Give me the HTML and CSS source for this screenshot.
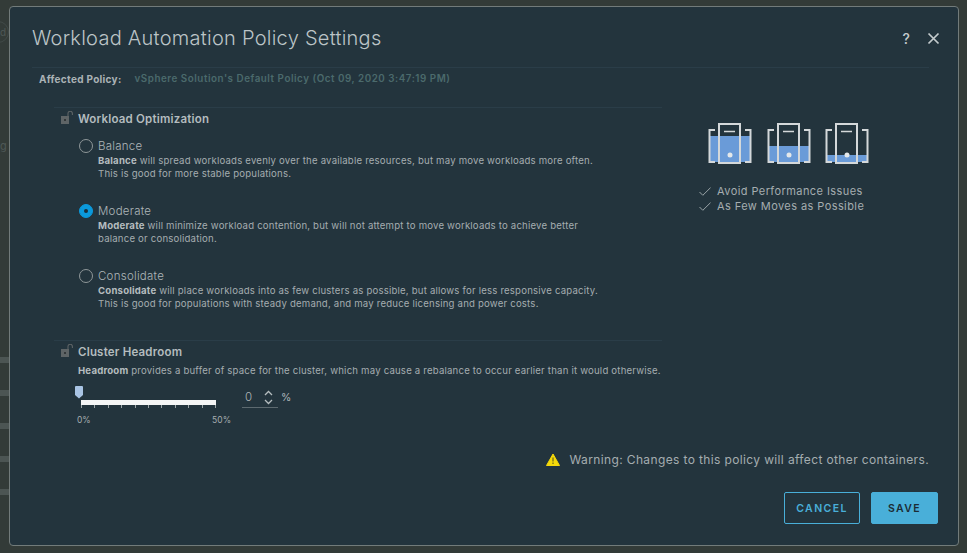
FILE: index.html
```html
<!DOCTYPE html>
<html lang="en">
<head>
<meta charset="utf-8">
<title>Workload Automation Policy Settings</title>
<link rel="stylesheet" href="styles.css">
</head>
<body>
<div class="backdrop-strip" aria-hidden="true">
  <div class="ghost-circle"><span>d</span></div>
  <div class="ghost-g">g</div>
  <div class="stripe first"></div>
  <div class="stripe"></div>
  <div class="stripe"></div>
  <div class="stripe"></div>
  <div class="stripe"></div>
</div>
<main class="modal">
  <header class="modal-head">
    <h1>Workload Automation Policy Settings</h1>
    <div class="head-actions">
      <span class="help">?</span>
      <svg class="close" width="13" height="13" viewBox="0 0 13 13"><path d="M1.5 1.5l10 10M11.5 1.5l-10 10" stroke="#c4cbcd" stroke-width="1.7" fill="none"/></svg>
    </div>
  </header>
  <div class="policy"><b>Affected Policy:</b><span>vSphere Solution's Default Policy (Oct 09, 2020 3:47:19 PM)</span></div>
  <div class="columns">
    <div class="settings">
      <section class="group optimization">
        <h2><svg class="lock" width="13" height="14" viewBox="0 0 13 14"><rect x="0" y="5" width="8" height="8" fill="#5e6466"/><rect x="3" y="8" width="2" height="2" fill="#33383a"/><path d="M7 5V2.5a2.2 2.2 0 0 1 4.4 0V4" stroke="#5e6466" stroke-width="1.1" fill="none"/></svg>Workload Optimization</h2>
        <div class="option">
          <span class="radio"></span>
          <div class="option-body">
            <div class="option-name">Balance</div>
            <p><b>Balance</b> will spread workloads evenly over the available resources, but may move workloads more often.<br>This is good for more stable populations.</p>
          </div>
        </div>
        <div class="option">
          <span class="radio on"></span>
          <div class="option-body">
            <div class="option-name">Moderate</div>
            <p><b>Moderate</b> will minimize workload contention, but will not attempt to move workloads to achieve better<br>balance or consolidation.</p>
          </div>
        </div>
        <div class="option">
          <span class="radio"></span>
          <div class="option-body">
            <div class="option-name">Consolidate</div>
            <p><b>Consolidate</b> will place workloads into as few clusters as possible, but allows for less responsive capacity.<br>This is good for populations with steady demand, and may reduce licensing and power costs.</p>
          </div>
        </div>
      </section>
      <section class="group headroom">
        <h2><svg class="lock" width="13" height="14" viewBox="0 0 13 14"><rect x="0" y="5" width="8" height="8" fill="#5e6466"/><rect x="3" y="8" width="2" height="2" fill="#33383a"/><path d="M7 5V2.5a2.2 2.2 0 0 1 4.4 0V4" stroke="#5e6466" stroke-width="1.1" fill="none"/></svg>Cluster Headroom</h2>
        <p class="head-desc"><b>Headroom</b> provides a buffer of space for the cluster, which may cause a rebalance to occur earlier than it would otherwise.</p>
        <div class="slider-row">
          <div class="slider">
            <svg class="thumb" width="8" height="13" viewBox="0 0 8 13"><path d="M0 1a1 1 0 0 1 1-1h6a1 1 0 0 1 1 1v8l-4 3.500-4-3.500z" fill="#a9c4e4"/></svg>
            <div class="track"></div>
            <div class="ticks"><i></i><i></i><i></i><i></i><i></i><i></i><i></i><i></i><i></i><i></i><i></i></div>
            <div class="limits"><span>0%</span><span>50%</span></div>
          </div>
          <div class="spinner">
            <div class="spin-field">
              <span class="spin-val">0</span>
              <svg width="9" height="15" viewBox="0 0 9 15"><path d="M1 5l3.500-3.500L8 5M1 10l3.500 3.500L8 10" stroke="#b5bdbf" stroke-width="1.300" fill="none"/></svg>
            </div>
            <span class="pct">%</span>
          </div>
        </div>
      </section>
    </div>
    <aside class="summary">
      <div class="hosts">
        <svg width="44" height="41" viewBox="0 0 44 41"><rect x="1" y="13" width="42" height="26" fill="#6a9bd8"/><path d="M7 7H1.500v32H7M37 7h5.500v32H37" stroke="#d4d8da" stroke-width="2" fill="none"/><rect x="11" y="1" width="21" height="39" fill="none" stroke="#d4d8da" stroke-width="2"/><path d="M16 8.500h11" stroke="#d4d8da" stroke-width="1.500"/><circle cx="22" cy="32" r="2.500" fill="#e4e8ea"/></svg>
        <svg width="44" height="41" viewBox="0 0 44 41"><rect x="1" y="23" width="42" height="16" fill="#6a9bd8"/><path d="M7 7H1.500v32H7M37 7h5.500v32H37" stroke="#d4d8da" stroke-width="2" fill="none"/><rect x="11" y="1" width="21" height="39" fill="none" stroke="#d4d8da" stroke-width="2"/><path d="M16 8.500h11" stroke="#d4d8da" stroke-width="1.500"/><circle cx="22" cy="32" r="2.500" fill="#e4e8ea"/></svg>
        <svg width="44" height="41" viewBox="0 0 44 41"><rect x="1" y="32" width="42" height="7" fill="#6a9bd8"/><path d="M7 7H1.500v32H7M37 7h5.500v32H37" stroke="#d4d8da" stroke-width="2" fill="none"/><rect x="11" y="1" width="21" height="39" fill="none" stroke="#d4d8da" stroke-width="2"/><path d="M16 8.500h11" stroke="#d4d8da" stroke-width="1.500"/><circle cx="22" cy="32" r="2.500" fill="#e4e8ea"/></svg>
      </div>
      <ul class="benefits">
        <li><svg width="12" height="9" viewBox="0 0 12 9"><path d="M.5 5l3.300 3.300L11.500.7" stroke="#9aa4a7" stroke-width="1" fill="none"/></svg>Avoid Performance Issues</li>
        <li><svg width="12" height="9" viewBox="0 0 12 9"><path d="M.5 5l3.300 3.300L11.500.7" stroke="#9aa4a7" stroke-width="1" fill="none"/></svg>As Few Moves as Possible</li>
      </ul>
    </aside>
  </div>
  <div class="warning">
    <svg width="14" height="13" viewBox="0 0 14 13"><path d="M7 1L13.500 12.500H.5z" fill="#f5d90a" stroke="#f5d90a" stroke-linejoin="round"/><path d="M7 4.500v4M7 9.500v1.500" stroke="#4a4a20" stroke-width="1"/></svg>
    <span>Warning: Changes to this policy will affect other containers.</span>
  </div>
  <footer class="actions">
    <button class="btn ghost" type="button">CANCEL</button>
    <button class="btn primary" type="button">SAVE</button>
  </footer>
</main>
</body>
</html>
```
FILE: styles.css
```css
* { box-sizing: border-box; }
html, body { margin: 0; height: 100%; }
body {
  width: 967px;
  height: 553px;
  overflow: hidden;
  background: #333b38;
  display: flex;
  align-items: flex-start;
  font-family: "Inter", "Liberation Sans", sans-serif;
  color: #adb5b8;
}
.backdrop-strip { width: 9px; flex: none; overflow: hidden; height: 100%; }
.ghost-circle {
  width: 22px; height: 22px; margin: 21px 0 0 -13px;
  border: 1px solid #414a48; border-radius: 50%;
  font-size: 10px; color: #4e5856; text-align: right; line-height: 20px; padding-right: 2px;
}
.ghost-g { margin: 96px 0 0 0; font-size: 11px; color: #4e5856; height: 14px; line-height: 14px; }
.stripe { height: 6px; background: #4c5553; margin-top: 27px; }
.stripe.first { margin-top: 204px; }
.modal {
  width: 950px;
  height: 540px;
  margin-top: 6px;
  flex: none;
  background: #23343d;
  border: 1px solid #727b7a;
  border-radius: 4px;
  padding: 0 29px 21px 22px;
  display: flex;
  flex-direction: column;
}
.modal-head {
  display: flex; justify-content: space-between; align-items: center;
  height: 50px; padding-top: 12px;
}
h1 { margin: 0; font-size: 20px; font-weight: 300; color: #bcc4c7; letter-spacing: .26px; white-space: nowrap; }
.head-actions { display: flex; align-items: center; gap: 17px; margin-right: -11px; }
.help { font-size: 14px; color: #c4cbcd; font-weight: 500; }
.policy {
  margin-top: 10px; padding: 5px 0 0 7px; height: 40px;
  border-top: 1px solid #2a3d48;
  line-height: 12px; white-space: nowrap;
  display: flex; gap: 13px;
}
.policy b { font-weight: 700; color: #aab2b5; font-size: 10px; letter-spacing: .3px; }
.policy span { color: #4b6a6c; font-weight: 600; letter-spacing: .54px; font-size: 9.800px; }
.columns { display: flex; flex: 1; min-height: 0; }
.settings { width: 608px; margin-left: 22px; flex: none; }
.group { border-top: 1px solid #2a3d48; }
.optimization { height: 233px; padding-top: 3px; }
h2 {
  display: flex; align-items: center; margin: 0;
  font-size: 11.500px; line-height: 16px; font-weight: 600; color: #b4bcbf; letter-spacing: .2px;
}
.lock { margin: -3px 4px 0 7px; flex: none; }
.option { display: flex; margin-left: 25px; height: 65px; }
.optimization h2 { margin-bottom: 12px; }
.radio {
  width: 14px; height: 14px; border: 1px solid #8f9799; border-radius: 50%; flex: none; margin: 0 5px 0 0;
}
.radio.on { background: #0b99db; border-color: #0b99db; position: relative; }
.radio.on::after {
  content: ""; position: absolute; left: 4px; top: 4px; width: 4px; height: 4px; border-radius: 50%; background: #1c2e38;
}
.option-name { font-size: 11.500px; line-height: 15px; font-weight: 300; color: #aeb6b9; letter-spacing: .25px; }
p { margin: 0; font-size: 9.600px; line-height: 13px; color: #a5adb0; white-space: nowrap; letter-spacing: .2px; }
p b { font-weight: 700; color: #b5bcbf; }
.headroom { padding-top: 3px; }
.headroom h2 { margin-bottom: 4px; }
.head-desc { margin-left: 24px; }
.slider-row { display: flex; margin-left: 21px; margin-top: 9px; }
.slider { width: 157px; flex: none; }
.thumb { display: block; }
.track { width: 135px; height: 5px; margin: 1px 0 0 6px; background: #f4f5f5; }
.ticks { width: 135px; margin-left: 6px; display: flex; justify-content: space-between; height: 3px; }
.ticks i { width: 1px; background: #9ba4a6; display: block; }
.limits {
  width: 154px; margin-left: 2px; display: flex; justify-content: space-between; margin-top: 7px;
  font-size: 8.500px; line-height: 10px; color: #a5adb0;
}
.spinner { display: flex; align-items: flex-start; margin: 2px 0 0 10px; }
.spin-field {
  width: 36px; height: 20px; border-bottom: 1px solid #5d6a70;
  display: flex; align-items: flex-start; padding: 2px 0 0 3px; gap: 12px;
}
.spin-val { font-size: 11.500px; line-height: 15px; font-weight: 300; color: #adb5b8; }
.pct { font-size: 10.500px; line-height: 15px; margin: 2px 0 0 3px; color: #adb5b8; }
.summary { width: 190px; margin-left: 34px; padding-top: 16px; flex: none; }
.hosts { display: flex; gap: 14.500px; margin-left: 12px; }
.benefits {
  list-style: none; margin: 20px 0 0 3px; padding: 0;
  font-size: 11px; line-height: 15px; color: #a5adb0; letter-spacing: .42px; font-weight: 400;
}
.benefits li { display: flex; align-items: center; gap: 6px; white-space: nowrap; }
.warning {
  display: flex; align-items: center; justify-content: flex-end; gap: 9px;
  height: 16px;
  font-size: 12px; color: #a5adb0; letter-spacing: .37px; white-space: nowrap; font-weight: 400;
}
.actions { display: flex; justify-content: flex-end; gap: 11px; margin-top: 25px; margin-right: -9px; }
.btn {
  height: 32px; border-radius: 2px; font-family: inherit; font-size: 10.500px; font-weight: 600;
  letter-spacing: 1.400px; padding: 0;
}
.ghost { width: 76px; background: transparent; border: 1px solid #49afd9; color: #49afd9; }
.primary { width: 67px; background: #49afd9; border: 1px solid #49afd9; color: #1c2c35; }
```
